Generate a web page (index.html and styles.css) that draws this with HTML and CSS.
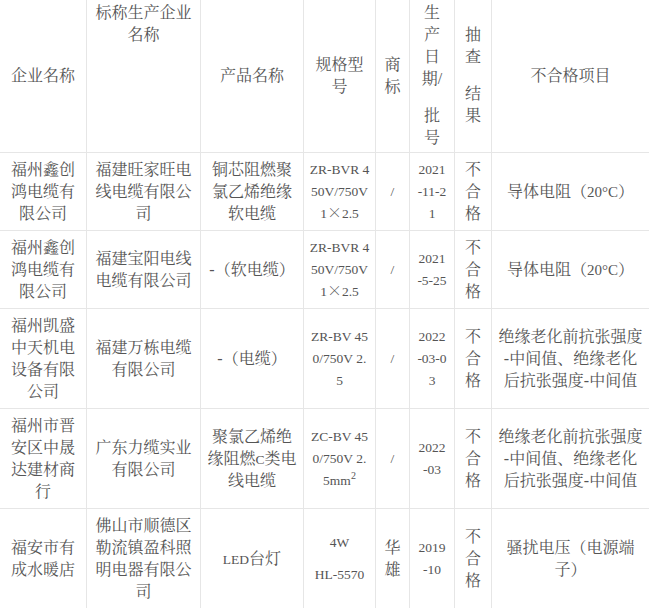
FILE: index.html
```html
<!DOCTYPE html>
<html lang="zh-CN">
<head>
<meta charset="utf-8">
<title>不合格产品名单</title>
<link rel="stylesheet" href="styles.css">
</head>
<body>
<table class="grid">
  <colgroup>
    <col class="c1"><col class="c2"><col class="c3"><col class="c4"><col class="c5"><col class="c6"><col class="c7"><col class="c8">
  </colgroup>
  <thead>
    <tr>
      <th>企业名称</th>
      <th class="top">标称生产企业<br>名称</th>
      <th>产品名称</th>
      <th>规格型<br>号</th>
      <th>商<br>标</th>
      <th>生<br>产<br>日<br>期/<span class="gap"></span>批<br>号</th>
      <th>抽<br>查<span class="gap"></span>结<br>果</th>
      <th class="last">不合格项目</th>
    </tr>
  </thead>
  <tbody>
    <tr>
      <td>福州鑫创<br>鸿电缆有<br>限公司</td>
      <td>福建旺家旺电<br>线电缆有限公<br>司</td>
      <td>铜芯阻燃聚<br>氯乙烯绝缘<br>软电缆</td>
      <td class="lat">ZR-BVR 4<br>50V/750V<br>1<span class="cjk">×</span>2.5</td>
      <td class="lat">/</td>
      <td class="lat">2021<br>-11-2<br>1</td>
      <td>不<br>合<br>格</td>
      <td class="last">导体电阻（<span class="lat big">20°C</span>）</td>
    </tr>
    <tr>
      <td>福州鑫创<br>鸿电缆有<br>限公司</td>
      <td>福建宝阳电线<br>电缆有限公司</td>
      <td>-（软电缆）</td>
      <td class="lat">ZR-BVR 4<br>50V/750V<br>1<span class="cjk">×</span>2.5</td>
      <td class="lat">/</td>
      <td class="lat">2021<br>-5-25</td>
      <td>不<br>合<br>格</td>
      <td class="last">导体电阻（<span class="lat big">20°C</span>）</td>
    </tr>
    <tr>
      <td>福州凯盛<br>中天机电<br>设备有限<br>公司</td>
      <td>福建万栋电缆<br>有限公司</td>
      <td>-（电缆）</td>
      <td class="lat">ZR-BV 45<br>0/750V 2.<br>5</td>
      <td class="lat">/</td>
      <td class="lat">2022<br>-03-0<br>3</td>
      <td>不<br>合<br>格</td>
      <td class="last">绝缘老化前抗张强度<br>-中间值、绝缘老化<br>后抗张强度-中间值</td>
    </tr>
    <tr>
      <td>福州市晋<br>安区中晟<br>达建材商<br>行</td>
      <td>广东力缆实业<br>有限公司</td>
      <td>聚氯乙烯绝<br>缘阻燃<span class="lat">C</span>类电<br>线电缆</td>
      <td class="lat">ZC-BV 45<br>0/750V 2.<br>5mm<sup>2</sup></td>
      <td class="lat">/</td>
      <td class="lat">2022<br>-03</td>
      <td>不<br>合<br>格</td>
      <td class="last">绝缘老化前抗张强度<br>-中间值、绝缘老化<br>后抗张强度-中间值</td>
    </tr>
    <tr class="end">
      <td>福安市有<br>成水暖店</td>
      <td>佛山市顺德区<br>勒流镇盈科照<br>明电器有限公<br>司</td>
      <td><span class="lat">LED</span>台灯</td>
      <td class="lat">4W<span class="gap small"></span>HL-5570</td>
      <td>华<br>雄</td>
      <td class="lat">2019<br>-10</td>
      <td>不<br>合<br>格</td>
      <td class="last">骚扰电压（电源端<br>子）</td>
    </tr>
  </tbody>
</table>
</body>
</html>
```
FILE: styles.css
```css
html, body {
  margin: 0;
  padding: 0;
  background: #ffffff;
}

body {
  font-family: "Liberation Serif", "Noto Serif CJK SC", "Noto Sans CJK SC", serif;
  color: #555555;
}

.grid {
  width: 649px;
  table-layout: fixed;
  border-collapse: separate;
  border-spacing: 0;
}

.c1 { width: 87px; }
.c2 { width: 114px; }
.c3 { width: 103px; }
.c4 { width: 72px; }
.c5 { width: 34px; }
.c6 { width: 45px; }
.c7 { width: 37px; }
.c8 { width: 157px; }

.grid th,
.grid td {
  font-family: "Liberation Serif", "Noto Serif CJK SC", "Noto Sans CJK SC", serif;
  font-size: 16px;
  line-height: 22px;
  font-weight: normal;
  color: #555555;
  text-align: center;
  vertical-align: middle;
  white-space: nowrap;
  padding: 6px 0 5px;
  border-right: 1px solid #e6e6e6;
  border-bottom: 1px solid #e6e6e6;
}

.grid th {
  padding: 2px 0 3px;
}

.grid th.top {
  vertical-align: top;
}

.grid .last {
  border-right: none;
}

.grid tr.end td {
  border-bottom: none;
}

.grid td.lat {
  font-size: 13.5px;
}

span.lat {
  font-size: 13.5px;
  line-height: 1;
}

span.lat.big {
  font-size: 15px;
}

.cjk {
  font-family: "Noto Serif CJK SC", "Noto Sans CJK SC", sans-serif;
  font-size: 15px;
  line-height: 1;
}

.gap {
  display: block;
  height: 15px;
}

.gap.small {
  height: 10px;
}

sup {
  font-size: 10px;
  line-height: 0;
  vertical-align: 6px;
}
```
